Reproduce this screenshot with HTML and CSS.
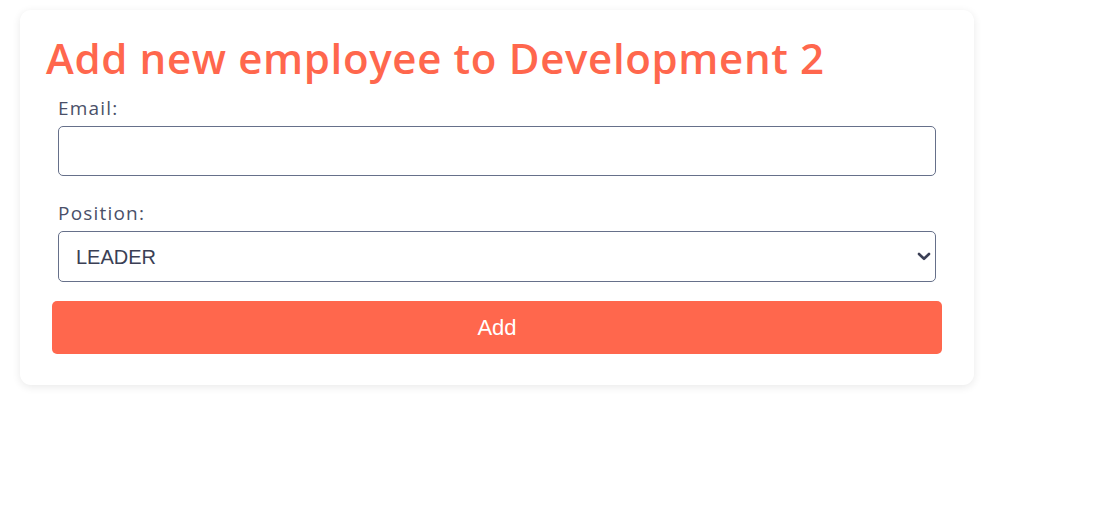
FILE: index.html
```html
<!DOCTYPE html>
<html lang="en">
<head>
<meta charset="utf-8">
<title>Add new employee</title>
<link rel="stylesheet" href="styles.css">
</head>
<body>
<div class="page">
  <div class="card">
    <h1 class="title">Add new employee to Development 2</h1>
    <form class="form">
      <div class="group">
        <label class="label" for="email">Email:</label>
        <input class="field" id="email" type="email">
      </div>
      <div class="group">
        <label class="label" for="position">Position:</label>
        <div class="select-wrap">
          <select class="field select" id="position">
            <option>LEADER</option>
            <option>MEMBER</option>
          </select>
          <svg class="chevron" width="14" height="9" viewBox="0 0 14 9" aria-hidden="true"><path d="M2 2 L7 6.8 L12 2" fill="none" stroke="#3b3f55" stroke-width="2.6" stroke-linecap="round" stroke-linejoin="round"/></svg>
        </div>
      </div>
      <button class="btn" type="button">Add</button>
    </form>
  </div>
</div>
</body>
</html>
```

FILE: styles.css
```css
html, body {
  margin: 0;
  padding: 0;
  background: #ffffff;
}

.page {
  padding: 10px 20px;
}

.card {
  width: 954px;
  box-sizing: border-box;
  background: #ffffff;
  border-radius: 11px;
  box-shadow: 0 2px 9px rgba(0, 0, 0, 0.09);
  padding: 23px 0 31px 0;
}

.title {
  margin: 0;
  padding: 0 26px;
  font-family: "Open Sans", sans-serif;
  font-weight: 600;
  font-size: 42px;
  line-height: 50px;
  color: #ff674d;
  letter-spacing: 0.65px;
}

.form {
  padding: 13px 32px 0 32px;
  display: flex;
  flex-direction: column;
}

.group {
  display: flex;
  flex-direction: column;
  padding: 0 6px;
  margin-bottom: 25px;
}

.group + .group {
  margin-bottom: 19px;
}

.label {
  font-family: "Open Sans", sans-serif;
  font-size: 19px;
  line-height: 24px;
  color: #4a5068;
  margin-bottom: 6px;
  letter-spacing: 1.2px;
}

.field {
  box-sizing: border-box;
  width: 100%;
  height: 50px;
  border: 1px solid #66708a;
  border-radius: 5px;
  background: #ffffff;
  font-family: "Liberation Sans", Arial, sans-serif;
  font-size: 20px;
  color: #3b3f55;
  padding: 0 18px;
  outline: none;
}

.select-wrap {
  position: relative;
}

.select {
  -webkit-appearance: none;
  appearance: none;
  height: 51px;
  padding-left: 17px;
}

.chevron {
  position: absolute;
  right: 5px;
  top: 21px;
  pointer-events: none;
}

.btn {
  height: 53px;
  border: none;
  border-radius: 5px;
  background: #ff674d;
  color: #ffffff;
  font-family: "Liberation Sans", Arial, sans-serif;
  font-size: 22px;
  cursor: pointer;
}
```
